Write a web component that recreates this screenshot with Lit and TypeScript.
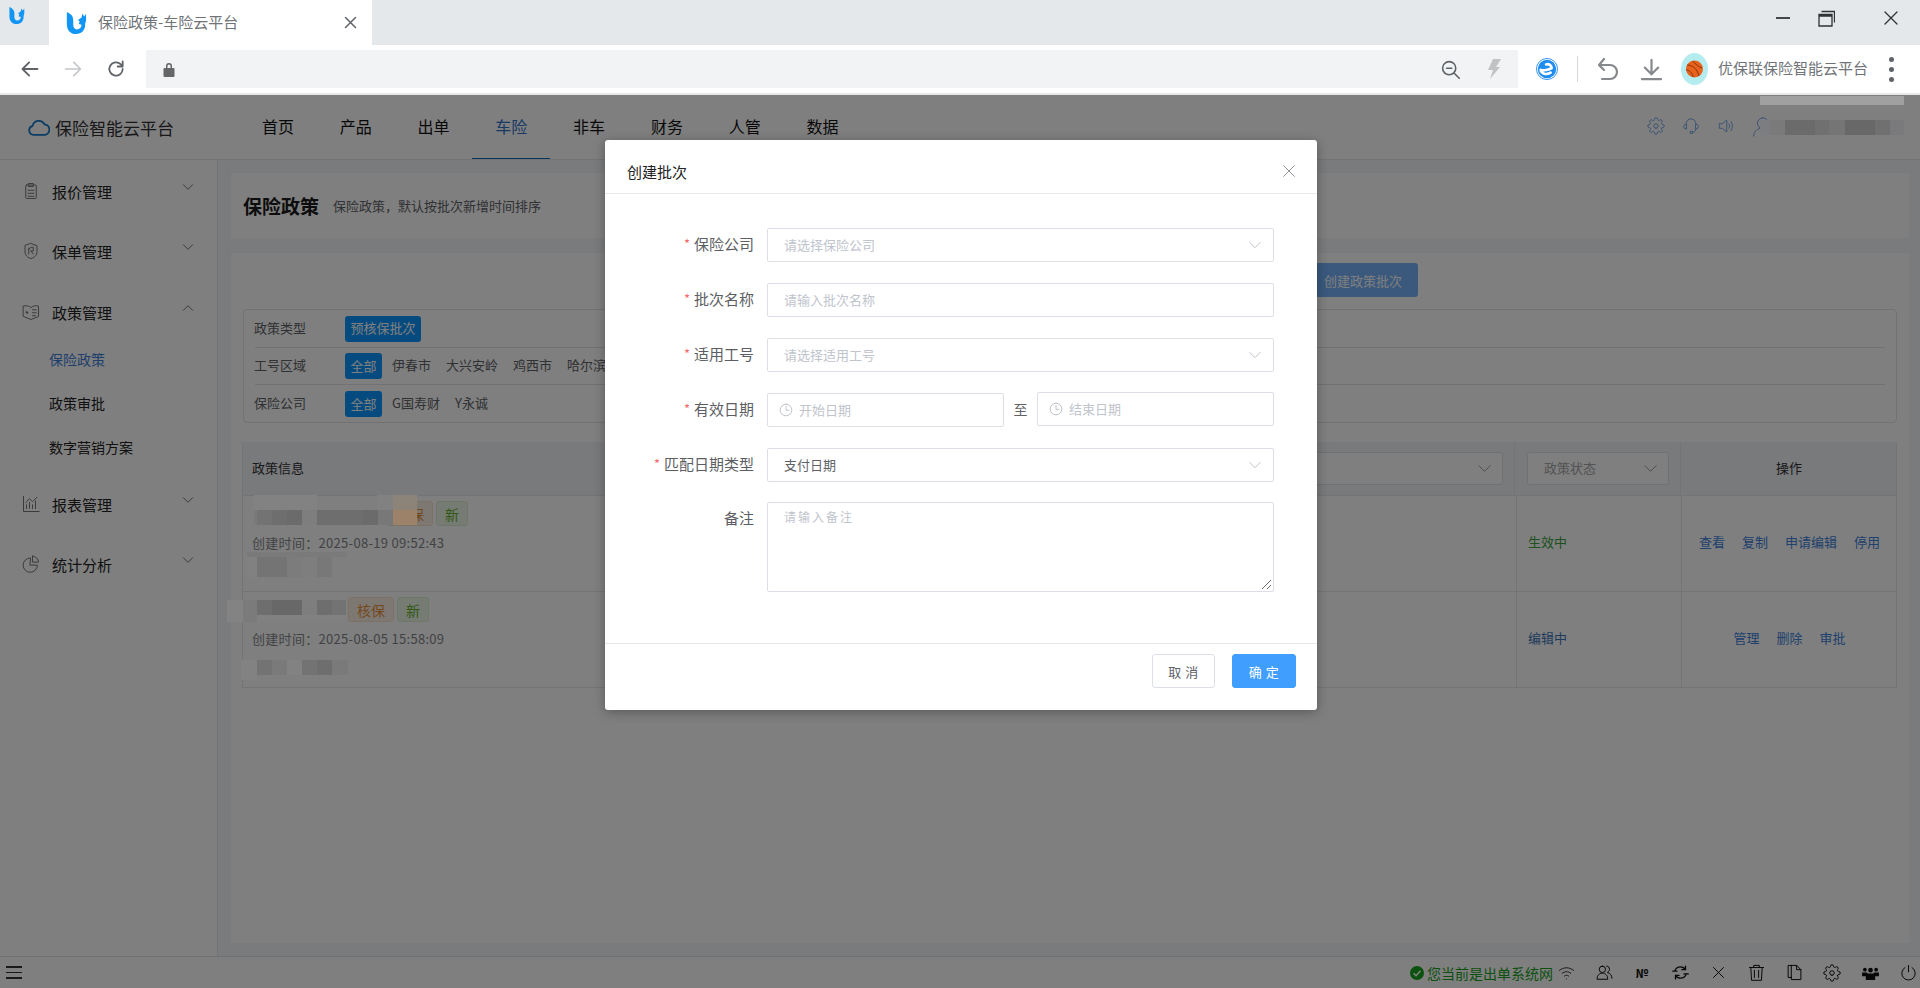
import { LitElement, html, css } from "lit";
import { customElement } from "lit/decorators.js";

const ic = (d: string, size = 18, extra = "", sw = 1) => html`<svg class="ic ${extra}" width=${size} height=${size} viewBox="0 0 24 24" fill="none" stroke="currentColor" stroke-width=${sw} stroke-linecap="round" stroke-linejoin="round"><path d=${d}></path></svg>`;

const P = {
  chevD: "M4 8l8 8 8-8",
  chevU: "M4 16l8-8 8 8",
  gear: "M12 15a3 3 0 1 0 0-6 3 3 0 0 0 0 6zM19.400 15a1.650 1.650 0 0 0 .33 1.820l.06.06a2 2 0 0 1 0 2.830 2 2 0 0 1-2.830 0l-.06-.06a1.650 1.650 0 0 0-1.820-.33 1.650 1.650 0 0 0-1 1.510V21a2 2 0 0 1-2 2 2 2 0 0 1-2-2v-.09A1.650 1.650 0 0 0 9 19.400a1.650 1.650 0 0 0-1.820.33l-.06.06a2 2 0 0 1-2.830 0 2 2 0 0 1 0-2.830l.06-.06a1.650 1.650 0 0 0 .33-1.820 1.650 1.650 0 0 0-1.510-1H3a2 2 0 0 1-2-2 2 2 0 0 1 2-2h.09A1.650 1.650 0 0 0 4.600 9a1.650 1.650 0 0 0-.33-1.820l-.06-.06a2 2 0 0 1 0-2.830 2 2 0 0 1 2.830 0l.06.06a1.650 1.650 0 0 0 1.820.33H9a1.650 1.650 0 0 0 1-1.510V3a2 2 0 0 1 2-2 2 2 0 0 1 2 2v.09a1.650 1.650 0 0 0 1 1.510 1.650 1.650 0 0 0 1.820-.33l.06-.06a2 2 0 0 1 2.830 0 2 2 0 0 1 0 2.830l-.06.06a1.650 1.650 0 0 0-.33 1.820V9a1.650 1.650 0 0 0 1.510 1H21a2 2 0 0 1 2 2 2 2 0 0 1-2 2h-.09a1.650 1.650 0 0 0-1.510 1z",
  headset: "M5.500 10V9a6.500 6.500 0 0 1 13 0v1M5.500 9.500a3 3 0 0 0 0 6.500zM18.500 9.500a3 3 0 0 1 0 6.500zM18.500 16c0 3-2 4.500-4.500 4.500M11.500 19h2.500v3h-2.500z",
  speaker: "M3 9v6h4l6 5V4L7 9zM16 9c1 2 1 4 0 6M19 6c2 4 2 8 0 12",
  user: "M13 1a6.500 6.500 0 1 0 0 13 6.500 6.500 0 0 0 0-13zM2 23c0-5 3-8 8-9.500",
  clip: "M6 4h12a1 1 0 0 1 1 1v16a1 1 0 0 1-1 1H6a1 1 0 0 1-1-1V5a1 1 0 0 1 1-1zM9 2h6v4H9zM8 11h8M8 15h8M8 19h8",
  shield: "M12 2l8 3v8c0 5-4 8-8 9-4-1-8-4-8-9V5zM9 8v8M9 10l3-3h3v5h-3M12 12l3 4",
  policy: "M2 4c4-1 7 0 10 2 3-2 6-3 10-2v14l-10 4-10-4zM6 11l1.500 3-2.500-1.500h3M14 9h5M14 13h5M14 17h4",
  chart: "M2 2v20h21M6 18v-5M10 18v-8M14 18v-5M18 18V8M5 10l5-5 4 4 6-6",
  pie: "M11 4a9.500 9.500 0 1 0 9.500 9.500H11zM14 1.500v8h8a8 8 0 0 0-8-8z",
  clock: "M12 2a10 10 0 1 0 0 20 10 10 0 0 0 0-20zM12 6v6.500h5",
  close: "M4 4l16 16M20 4L4 20",
  wifi: "M2 9c6-5 14-5 20 0M6 13c4-3 8-3 12 0M9 17c2-1.500 4-1.500 6 0M12 21h.01",
  users: "M9 3a4.500 4.500 0 1 0 0 9 4.500 4.500 0 0 0 0-9zM1.500 21c0-5 3-8 7.500-8s7.500 3 7.500 8zM15 3c3 0 4 2 4 4.500s-1.500 4-3 4.500c4 1 6.500 4 6.500 8",
  sync: "M4 10c1-4 4-6 8-6 3 0 5 1 7 4M20 14c-1 4-4 6-8 6-3 0-5-1-7-4M19 3v5h-5M5 21v-5h5M1 10h6M17 14h6",
  trash: "M2 5h20M8 5V2h8v3M4 5l1 18h14l1-18M9 9v10M15 9v10",
  copy: "M8 2H3v17h5M8 2h7l6 6v14H8zM15 2v6h6",
  power: "M12 2v9M7 5a9.500 9.500 0 1 0 10 0",
  back: "M21 12H4M11 4l-8 8 8 8",
  fwd: "M3 12h17M13 4l8 8-8 8",
  reload: "M20 12a8 8 0 1 1-2.500-5.800L20 8.500M20 3v6h-6",
  zoomOut: "M10.500 3a7.500 7.500 0 1 0 0 15 7.500 7.500 0 0 0 0-15zM7.500 10.500h6M16 16l6 6",
  undo: "M8 2L3 8l5 5M3 8h11a7 7 0 0 1 0 14H6",
  dl: "M12 2v15M5 10l7 7 7-7M2 22h20",
};

type Cell = [number, number, number, number, string];

// Redaction mosaics: each block is [x, y, width, height, colour].
const mosaics: Cell[] = [
  [1760, 96, 144, 9, "#a0a0a0"],
  [1760, 120, 10, 15, "#7c7d80"], [1770, 120, 15, 15, "#7a7a7a"], [1785, 120, 30, 15, "#6b6b6b"], [1815, 120, 14, 15, "#707070"],
  [1829, 120, 16, 15, "#757575"], [1845, 120, 30, 15, "#686868"], [1875, 120, 15, 15, "#707070"], [1890, 120, 14, 15, "#7a7a7c"],
  [254, 495, 63, 15, "#828282"], [393, 495, 24, 15, "#8c8478"], [377, 495, 16, 15, "#818181"],
  [254, 510, 3, 15, "#7a7a7a"], [257, 510, 15, 15, "#737373"], [272, 510, 15, 15, "#6e6e6e"], [287, 510, 15, 15, "#6b6b6b"], [302, 510, 15, 15, "#7e7e7e"],
  [317, 510, 46, 15, "#6e6e6e"], [363, 510, 15, 15, "#6b6b6b"], [378, 510, 15, 15, "#787878"], [393, 510, 24, 15, "#9c8268"],
  [247, 552, 100, 5, "#7a7a7a"], [247, 557, 10, 20, "#818181"], [257, 557, 30, 20, "#747474"], [287, 557, 15, 20, "#7c7c7c"], [302, 557, 15, 20, "#7e7e7e"], [317, 557, 15, 20, "#787878"],
  [227, 600, 30, 22, "#828382"], [243, 600, 14, 22, "#7b7b7b"], [257, 600, 15, 15, "#6e6e6e"], [272, 600, 30, 15, "#686868"], [302, 600, 15, 15, "#7e7e7e"], [317, 600, 15, 15, "#6e6e6e"], [332, 600, 14, 15, "#737373"],
  [257, 615, 89, 6, "#818181"],
  [241, 660, 16, 20, "#828282"], [257, 660, 15, 15, "#737373"], [272, 660, 15, 15, "#7a7a7a"], [287, 660, 15, 15, "#828282"], [302, 660, 15, 15, "#737373"], [317, 660, 15, 15, "#6e6e6e"], [332, 660, 16, 15, "#7a7a7a"],
];

const AREAS = ["伊春市", "大兴安岭", "鸡西市", "哈尔滨市"];
const INSURERS = ["G国寿财", "Y永诚"];

@customElement("app-root")
export class AppRoot extends LitElement {
  static styles = css`
    :host { display: block; width: 1920px; height: 988px; overflow: hidden; position: relative;
      font-family: "Noto Sans CJK SC", "Liberation Sans", sans-serif; color: #303133; font-size: 14px; }
    * { box-sizing: border-box; }
    .ic { display: block; flex: none; }
    .ic path { vector-effect: non-scaling-stroke; }

    .tabs { height: 45px; background: #e5e8eb; display: flex; }
    .tab0 { width: 49px; padding: 7px 0 0 8px; }
    .tab { width: 323px; background: #fff; display: flex; align-items: center; padding: 0 14px 0 16px; color: #6f7378; font-size: 15px; }
    .tab .ttl { margin-left: 11px; flex: 1; padding-bottom: 2px; }
    .tab .ic { color: #5f6368; }
    .win { margin-left: auto; display: flex; align-items: center; height: 36px; color: #2f3235; padding-right: 20px; }
    .win .min { width: 14px; height: 1.500px; background: #44474a; margin-right: 28px; }
    .win .ic.mx { margin-right: 47px; color: #2f3235; }

    .bar { height: 48px; background: #fff; display: flex; align-items: center; color: #5f6368; }
    .nav { display: flex; align-items: center; gap: 23px; padding-left: 20px; width: 146px; }
    .nav .off { color: #c4c7c9; }
    .addr { width: 1372px; height: 38px; background: #f1f3f4; display: flex; align-items: center; padding: 0 17px 0 17px; }
    .addr .r { margin-left: auto; display: flex; align-items: center; gap: 26px; }
    .tools { display: flex; align-items: center; flex: 1; padding-left: 18px; }
    .sep { width: 1px; height: 26px; background: #d5d7d9; margin: 0 18px 0 19px; }
    .tools .dl { margin-left: 20px; color: #85888c; }
    .tools .undo { color: #85888c; }
    .avatar { margin-left: 18px; }
    .ext { margin-left: 10px; font-size: 15px; color: #6f7378; white-space: nowrap; padding-bottom: 3px; }
    .dots { margin-left: 21px; display: flex; flex-direction: column; gap: 5px; }
    .dots i { width: 5px; height: 5px; border-radius: 50%; background: #5f6368; display: block; }
    .line { height: 2px; background: #e8e8e8; }

    .page { height: 893px; display: flex; flex-direction: column; background: #fff; }
    .hdr { height: 65px; flex: none; display: flex; align-items: center; border-bottom: 1px solid #e4e7ed; background: #fff; position: relative; }
    .logo { width: 230px; padding-left: 28px; display: flex; align-items: center; gap: 5px; font-size: 17px; color: #303133; }
    .logo .ic { color: #1478c8; }
    .menu { display: flex; height: 64px; margin-left: 9px; }
    .menu span { width: 77.800px; display: flex; align-items: center; justify-content: center; font-size: 16px; color: #111; padding-bottom: 2px; }
    .menu .on { color: #2f72c8; border-bottom: 1px solid #1268b8; height: 64px; }
    .hicons { margin-left: auto; display: flex; gap: 17px; padding-right: 148px; color: #7aa8e8; }

    .body { flex: 1; display: flex; min-height: 0; }
    .side { width: 218px; flex: none; background: #fff; border-right: 1px solid #e4e7ed; padding-top: 7px; }
    .mi { height: 50px; display: flex; align-items: center; padding: 0 0 2px 22px; font-size: 15px; color: #222; margin-bottom: 10px; position: relative; }
    .mi .ic:first-child { color: #777; margin-right: 12px; }
    .mi .ic.arr { position: absolute; left: 181px; top: 13px; color: #777; }
    .mi.open { margin-bottom: 0; margin-top: 11px; }
    .sub { height: 44px; display: flex; align-items: center; padding: 0 0 2px 49px; font-size: 14px; color: #222; }
    .sub.on { color: #3d7fd6; }
    .gap { height: 10px; }

    .main { flex: 1; background: #f4f6fa; padding: 13px 11px 13px 13px; display: flex; flex-direction: column; gap: 15px; min-width: 0; }
    .head { height: 65px; flex: none; background: #fff; display: flex; align-items: center; padding-left: 12px; gap: 14px; }
    .head b { font-size: 19px; color: #1a1a1a; font-weight: 700; }
    .head span { font-size: 13px; color: #606266; }

    .card { flex: 1; background: #fff; padding: 10px 12px 0 12px; display: flex; flex-direction: column; }
    .act { display: flex; justify-content: flex-end; padding-right: 479px; }
    .btn { height: 34px; width: 110px; display: flex; align-items: center; justify-content: center; background: #74b2fa; color: #fff; border-radius: 3px; font-size: 13px; }

    .filter { margin-top: 12px; height: 114px; border: 1px solid #e2e4e8; border-radius: 4px; padding: 0 11px 0 11px; }
    .fr { height: 37px; display: flex; align-items: center; border-bottom: 1px solid #e2e4e8; font-size: 13px; color: #606266; }
    .fr:first-child { height: 38px; }
    .fr:last-child { border-bottom: 0; height: 38px; }
    .fr .lb { width: 91px; flex: none; margin-left: -1px; padding-bottom: 3px; }
    .chip { height: 26px; padding: 0 5.500px 2px; display: flex; align-items: center; border-radius: 3px; background: #0a96ff; color: #fff; margin-right: 10px; }
    .opt { margin-right: 15px; white-space: nowrap; padding-bottom: 3px; }

    .table { margin-top: 19px; margin-left: -1px; border-right: 1px solid #e6e8ec; border-bottom: 1px solid #e6e8ec; border-left: 1px solid #e6e8ec; }
    .tr { display: grid; grid-template-columns: 1273px 165px 216px; }
    .tr.th { height: 53px; background: #f3f5f9; font-size: 13px; grid-template-columns: 1271px 166px 217px; }
    .tr.th .td { padding: 0 12px 0 12px; }
    .tr.th .td:first-child { padding-left: 9px; justify-content: space-between; padding-right: 11px; }
    .tr.th .td > span { padding-bottom: 3px; }
    .tr.row { height: 96px; border-top: 1px solid #e6e8ec; font-size: 13px; }
    .td { display: flex; align-items: center; padding: 0 11px 5px; border-left: 1px solid #e6e8ec; min-width: 0; }
    .td:first-child { border-left: 0; }
    .td.c { justify-content: center; }
    .info { display: block; padding: 5px 9px 0 9px; color: #808288; }
    .tags { height: 25px; display: flex; gap: 3px; align-items: center; }
    .tags .sp { flex: none; }
    .tag { height: 25px; padding: 0 8px; font-size: 14px; border-radius: 3px; display: flex; align-items: center; }
    .tag.w { background: #fdf1e6; border: 1px solid #fae3cd; color: #e8913a; }
    .tag.s { background: #ecf7e6; border: 1px solid #dbf0d0; color: #67b22e; }
    .time { margin-top: 7px; color: #83858a; letter-spacing: .3px; }
    .sel { height: 33px; border: 1px solid #dfe2e6; border-radius: 3px; background: #fff; display: flex; align-items: center; justify-content: space-between; padding: 0 9px 0 16px; color: #a4a6aa; width: 142px; flex: none; }
    .sel.wide { width: 320px; }
    .sel span { padding-bottom: 3px; }
    .sel .ic { color: #999; }
    .ok { color: #3da33d; }
    .edit { color: #3e76b8; }
    .lnk { display: flex; gap: 17px; color: #3f82da; white-space: nowrap; }

    .foot { height: 32px; flex: none; background: #fff; border-top: 1px solid #e0e0e0; display: flex; align-items: center; padding: 0 0 0 6px; color: #111; position: relative; }
    .foot .ham { display: flex; flex-direction: column; gap: 4px; }
    .foot .ham i { display: block; width: 16px; height: 1.500px; background: #333; }
    .foot .st { margin-left: auto; margin-right: 10px; display: flex; align-items: center; color: #18a01c; font-size: 14px; }
    .foot .st .ic { margin-right: 3px; }
    .foot .ics { display: flex; align-items: center; margin-right: -7px; }
    .foot .ics > * { width: 38px; display: flex; justify-content: center; align-items: center; }
    .foot .wf { margin-left: 5px; color: #333; }
    .foot .wf .ic { margin-right: 0; }
    .no { font-size: 12px; font-weight: 700; }

    .scrim { position: absolute; left: 0; right: 0; top: 95px; bottom: 0; background: rgba(0, 0, 0, .5); padding: 45px 0 0 605px; }
    .modal { width: 712px; height: 570px; background: #fff; border-radius: 3px; box-shadow: 0 2px 12px rgba(0, 0, 0, .3); display: flex; flex-direction: column; }
    .mh { height: 54px; flex: none; border-bottom: 1px solid #e8e8ec; display: flex; align-items: center; justify-content: space-between; padding: 9px 20px 0 22px; font-size: 15px; color: #222; }
    .mh .ic { color: #909399; }
    .mb { flex: 1; padding: 34px 43px 0 17px; }
    .fi { display: flex; margin-bottom: 21px; }
    .fi.last { margin-bottom: 0; }
    .fi.tight { margin-bottom: 20px; }
    .fl { width: 132px; margin-right: 13px; flex: none; height: 34px; display: flex; align-items: center; justify-content: flex-end; font-size: 15px; color: #5c5e63; padding-bottom: 3px; }
    .fl i { color: #f56c6c; font-style: normal; margin-right: 4px; font-size: 13px; }
    .fc { flex: 1; height: 34px; border: 1px solid #dcdfe6; border-radius: 2px; display: flex; align-items: center; justify-content: space-between; padding: 0 10px 0 16px; font-size: 13px; color: #c0c4cc; min-width: 0; }
    .fc span { padding-bottom: 2px; }
    .fc .ic { color: #c0c4cc; }
    .fc.val { color: #606266; }
    .fc.date { justify-content: flex-start; padding-left: 11px; gap: 6px; }
    .fc.date.up { margin-top: -1px; }
    .to { width: 33px; text-align: center; line-height: 32px; color: #606266; }
    .fc.area { height: 90px; align-items: flex-start; padding-top: 5px; font-size: 12px; letter-spacing: 2px; position: relative; }
    .grip { position: absolute; right: 1px; bottom: 1px; color: #444; }
    .mf { height: 67px; flex: none; border-top: 1px solid #e8e8ec; display: flex; justify-content: flex-end; align-items: flex-start; gap: 17px; padding: 10px 21px 0 0; }
    .b { width: 63px; height: 34px; border: 1px solid #dcdfe6; border-radius: 3px; display: flex; align-items: center; justify-content: center; font-size: 13px; color: #606266; white-space: pre; letter-spacing: .5px; }
    .b.p { background: #409eff; border-color: #409eff; color: #fff; width: 64px; }

    .mask { position: absolute; left: 0; top: 0; width: 0; height: 0; }
    .mask i { position: absolute; display: block; }
  `;

  private uLogo(size: number) {
    return html`<svg class="ic" width=${size} height=${size} viewBox="0 0 24 24"><path fill="#1196f5" d="M2 0c4 2 7 4 7 9v5c0 3 1.500 5 4 5 3 0 5-2 5-5l-3-1 1-3-2-1 4-3 1-4 2 3 2-3 0 7-1 4v1c0 6-4 10-10 10S2 20 2 13z"></path></svg>`;
  }

  private eIcon() {
    return html`<svg class="ic" width="22" height="22" viewBox="0 0 24 24"><circle cx="12" cy="12" r="11.500" fill="#fff" stroke="#2d8cf0" stroke-width="1"></circle><circle cx="12" cy="12" r="10" fill="#1e8cf0"></circle><path d="M5 13c3 1 9 0 12-2 0-3-3-5-6-4M5 13c1 4 6 6 11 3" fill="none" stroke="#fff" stroke-width="2.600" stroke-linecap="round"></path></svg>`;
  }

  private ball() {
    return html`<svg class="avatar ic" width="27" height="32" viewBox="0 0 27 32"><ellipse cx="13.500" cy="16" rx="13.500" ry="16" fill="#b4ecf0"></ellipse><circle cx="13.500" cy="16" r="8.500" fill="#e8621c"></circle><path d="M6 12c5 0 10 3 12 11M12 8c3 4 6 6 9 7M5 17c3 0 6 2 7 7" fill="none" stroke="#6b2a08" stroke-width=".8"></path></svg>`;
  }

  private select(text: string, cls = "") {
    return html`<div class="fc ${cls}"><span>${text}</span>${ic(P.chevD, 16)}</div>`;
  }

  private field(label: string, req: boolean, content: unknown, cls = "") {
    return html`<div class="fi ${cls}"><div class="fl">${req ? html`<i>*</i>` : ""}${label}</div>${content}</div>`;
  }

  private row(tag: unknown, time: string, status: unknown, links: string[]) {
    return html`<div class="tr row">
      <div class="td info">
        <div class="tags">${tag}<span class="tag s">新</span></div>
        <div class="time">创建时间：${time}</div>
      </div>
      <div class="td">${status}</div>
      <div class="td c"><div class="lnk">${links.map((l) => html`<span>${l}</span>`)}</div></div>
    </div>`;
  }

  render() {
    return html`
      <div class="tabs">
        <div class="tab0">${this.uLogo(17)}</div>
        <div class="tab">${this.uLogo(22)}<span class="ttl">保险政策-车险云平台</span>${ic(P.close, 15, "", 1.5)}</div>
        <div class="win"><div class="min"></div>
          <svg class="ic mx" width="17" height="17" viewBox="0 0 17 17" fill="none" stroke="currentColor" stroke-width="1.300"><path d="M1 4.500h13v11.500H1zM1 6h13M3.500 1.500h13v11"></path></svg>
          ${ic(P.close, 18, "", 1.3)}</div>
      </div>
      <div class="bar">
        <div class="nav">${ic(P.back, 20, "", 1.8)}<span class="off">${ic(P.fwd, 20, "", 1.6)}</span>${ic(P.reload, 20, "", 1.8)}</div>
        <div class="addr">
          <svg class="ic" width="12" height="15" viewBox="0 0 12 15"><path fill="#666" d="M3 6V4a3 3 0 0 1 6 0v2h1.500a1 1 0 0 1 1 1v7a1 1 0 0 1-1 1h-9a1 1 0 0 1-1-1V7a1 1 0 0 1 1-1zM4.500 6h3V4a1.500 1.500 0 0 0-3 0z"></path></svg>
          <div class="r">${ic(P.zoomOut, 21, "", 1.6)}<svg class="ic" width="14" height="20" viewBox="0 0 14 20"><path fill="#c0c2c4" d="M6 0h8L9 8h4L3 20l3-9H1z"></path></svg></div>
        </div>
        <div class="tools">
          ${this.eIcon()}<div class="sep"></div>
          <span class="undo">${ic(P.undo, 24, "", 2.2)}</span><span class="dl">${ic(P.dl, 23, "", 2.2)}</span>
          ${this.ball()}<span class="ext">优保联保险智能云平台</span>
          <div class="dots"><i></i><i></i><i></i></div>
        </div>
      </div>
      <div class="line"></div>

      <div class="page">
        <div class="hdr">
          <div class="logo"><svg class="ic" width="22" height="17" viewBox="0 0 24 18" fill="none" stroke="currentColor" stroke-width="1.800"><path d="M6 17a5 5 0 0 1-1-9.800A7 7 0 0 1 18 5.500 5.800 5.800 0 0 1 18.500 17z"></path></svg>保险智能云平台</div>
          <div class="menu">${["首页", "产品", "出单", "车险", "非车", "财务", "人管", "数据"].map((m) => html`<span class=${m === "车险" ? "on" : ""}>${m}</span>`)}</div>
          <div class="hicons">${ic(P.gear, 18)}${ic(P.headset, 18)}${ic(P.speaker, 18)}${ic(P.user, 20)}</div>
        </div>
        <div class="body">
          <div class="side">
            <div class="mi">${ic(P.clip)}报价管理${ic(P.chevD, 14, "arr")}</div>
            <div class="mi" style="margin-bottom:0">${ic(P.shield)}保单管理${ic(P.chevD, 14, "arr")}</div>
            <div class="mi open">${ic(P.policy)}政策管理${ic(P.chevU, 14, "arr")}</div>
            <div class="sub on">保险政策</div>
            <div class="sub">政策审批</div>
            <div class="sub">数字营销方案</div>
            <div class="gap"></div>
            <div class="mi">${ic(P.chart)}报表管理${ic(P.chevD, 14, "arr")}</div>
            <div class="mi">${ic(P.pie)}统计分析${ic(P.chevD, 14, "arr")}</div>
          </div>
          <div class="main">
            <div class="head"><b>保险政策</b><span>保险政策，默认按批次新增时间排序</span></div>
            <div class="card">
              <div class="act"><div class="btn">创建政策批次</div></div>
              <div class="filter">
                <div class="fr"><span class="lb">政策类型</span><span class="chip">预核保批次</span></div>
                <div class="fr"><span class="lb">工号区域</span><span class="chip">全部</span>${AREAS.map((a) => html`<span class="opt">${a}</span>`)}</div>
                <div class="fr"><span class="lb">保险公司</span><span class="chip">全部</span>${INSURERS.map((a) => html`<span class="opt">${a}</span>`)}</div>
              </div>
              <div class="table">
                <div class="tr th">
                  <div class="td"><span>政策信息</span><div class="sel wide"><span></span>${ic(P.chevD, 17)}</div></div>
                  <div class="td"><div class="sel"><span>政策状态</span>${ic(P.chevD, 17)}</div></div>
                  <div class="td c"><span>操作</span></div>
                </div>
                ${this.row(html`<span class="sp" style="width:132px"></span><span class="tag w">核保</span>`, "2025-08-19 09:52:43", html`<span class="ok">生效中</span>`, ["查看", "复制", "申请编辑", "停用"])}
                ${this.row(html`<span class="sp" style="width:93px"></span><span class="tag w">核保</span>`, "2025-08-05 15:58:09", html`<span class="edit">编辑中</span>`, ["管理", "删除", "审批"])}
              </div>
            </div>
          </div>
        </div>
        <div class="foot">
          <div class="ham"><i></i><i></i><i></i></div>
          <div class="st">
            <svg class="ic" width="14" height="14" viewBox="0 0 14 14"><circle cx="7" cy="7" r="7" fill="#16a51c"></circle><path d="M3.500 7.200l2.500 2.500 4.500-5" fill="none" stroke="#fff" stroke-width="1.600"></path></svg>
            您当前是出单系统网<span class="wf">${ic(P.wifi, 17)}</span>
          </div>
          <div class="ics">
            <span>${ic(P.users, 17)}</span><span class="no">№</span><span>${ic(P.sync, 17, "", 1.4)}</span><span>${ic(P.close, 15)}</span>
            <span>${ic(P.trash, 17)}</span><span>${ic(P.copy, 17)}</span><span>${ic(P.gear, 18)}</span>
            <span><svg class="ic" width="17" height="15" viewBox="0 0 18 16"><path fill="#111" d="M9 3a2.500 2.500 0 1 1 0 5 2.500 2.500 0 0 1 0-5zM3 3a2 2 0 1 1 0 4 2 2 0 0 1 0-4zM15 3a2 2 0 1 1 0 4 2 2 0 0 1 0-4zM0 8h5l1 1h6l1-1h5v4h-4v4H4v-4H0z"></path></svg></span>
            <span>${ic(P.power, 17)}</span>
          </div>
        </div>
      </div>

      <div class="scrim">
        <div class="modal">
          <div class="mh"><span>创建批次</span>${ic(P.close, 16)}</div>
          <div class="mb">
            ${this.field("保险公司", true, this.select("请选择保险公司"))}
            ${this.field("批次名称", true, html`<div class="fc"><span>请输入批次名称</span></div>`)}
            ${this.field("适用工号", true, this.select("请选择适用工号"))}
            ${this.field("有效日期", true, html`<div class="fc date">${ic(P.clock, 14)}<span>开始日期</span></div><div class="to">至</div><div class="fc date up">${ic(P.clock, 14)}<span>结束日期</span></div>`)}
            ${this.field("匹配日期类型", true, this.select("支付日期", "val"), "tight")}
            ${this.field("备注", false, html`<div class="fc area"><span>请输入备注</span><svg class="grip" width="11" height="11" viewBox="0 0 11 11" fill="none" stroke="currentColor" stroke-width=".8"><path d="M1 10l9-9M6 10l4-4"></path></svg></div>`, "last")}
          </div>
          <div class="mf"><div class="b">取 消</div><div class="b p">确 定</div></div>
        </div>
      </div>

      <div class="mask">${mosaics.map(([x, y, w, h, c]) => html`<i style="left:${x}px;top:${y}px;width:${w}px;height:${h}px;background:${c}"></i>`)}</div>
    `;
  }
}
